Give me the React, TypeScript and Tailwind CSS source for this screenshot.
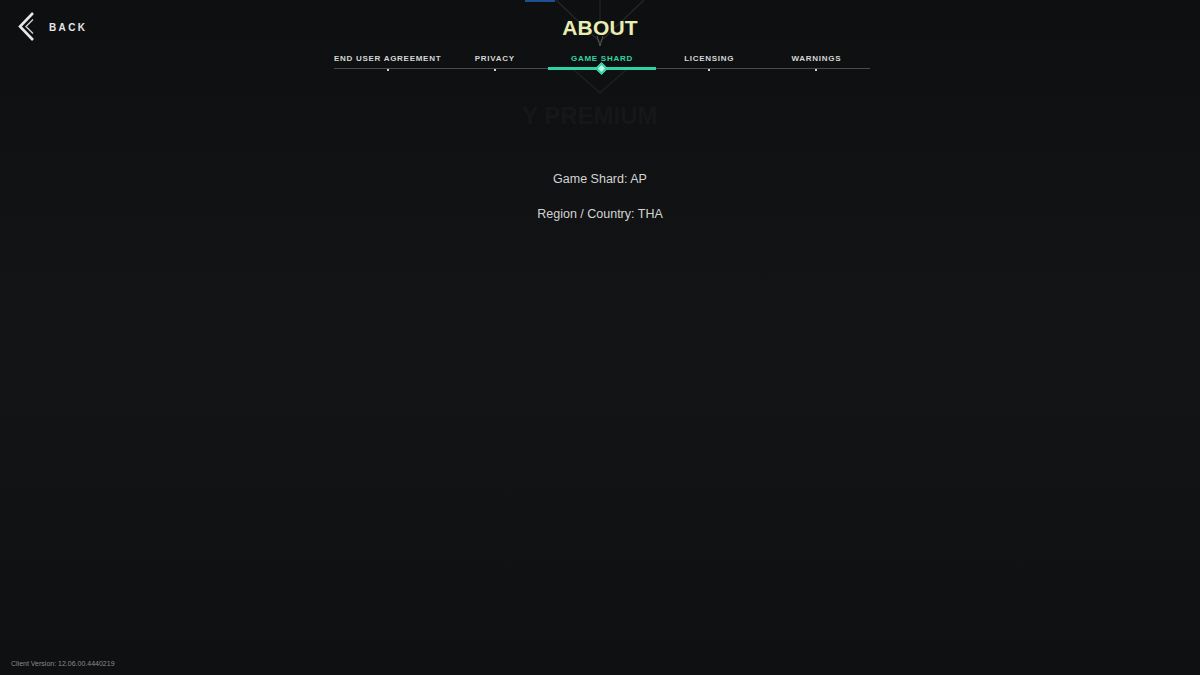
import React from "react";

const tabs = [
  { label: "END USER AGREEMENT" },
  { label: "PRIVACY" },
  { label: "GAME SHARD", active: true },
  { label: "LICENSING" },
  { label: "WARNINGS" },
];

function BackIcon() {
  return (
    <svg width="18" height="30" viewBox="0 0 18 30" fill="none">
      <path d="M15 1 L2 14.5 L15 28" stroke="#e8e8e8" strokeWidth="2.6" strokeLinejoin="miter" />
      <path d="M15 7.5 L8 14.5 L15 21.5" stroke="#d0d0d0" strokeWidth="1.4" />
    </svg>
  );
}

// faint diamond drawing behind the title
function BackdropLines() {
  return (
    <svg className="absolute left-0 top-0 pointer-events-none" width="1200" height="160" viewBox="0 0 1200 160" fill="none">
      <rect x="525" y="0" width="30" height="2" fill="#1f4f8f" />
      <path d="M556 0 L600 42 L644 0" stroke="#27282a" strokeWidth="1.2" />
      <path d="M600 0 L600 22" stroke="#27282a" strokeWidth="1" />
      <path d="M574 70 L600 93 L626 70" stroke="#202123" strokeWidth="1.2" />
      <path d="M597 36 L600 46 L603 36" stroke="#555" strokeWidth="1" />
      <text x="522" y="124" fill="#161718" fontFamily="'Liberation Sans', sans-serif" fontWeight="700" fontSize="24">Y  PREMIUM</text>
    </svg>
  );
}

export default function App() {
  return (
    <div
      className="relative w-[1200px] h-[675px] overflow-hidden bg-gradient-to-b from-[#0e0f10] via-[#131415] to-[#0f1011] text-white"
      style={{ fontFamily: "'Liberation Sans', Arial, sans-serif" }}
    >
      <BackdropLines />

      <div className="relative flex flex-col h-full">
        {/* Header */}
        <div className="grid grid-cols-[1fr_auto_1fr] items-start">
          <button className="flex items-center gap-[13px] pl-[18px] pt-[12px] justify-self-start">
            <BackIcon />
            <span className="text-[10px] font-bold tracking-[0.24em] text-[#e6e6e6]">BACK</span>
          </button>
          <h1 className="pt-[16px] text-[21px] leading-[24px] font-bold text-[#e9edb4] tracking-[0.01em]">
            ABOUT
          </h1>
          <div />
        </div>

        {/* Tabs */}
        <div className="mx-auto mt-[12px] w-[536px] translate-x-[2px]">
          <div className="grid grid-cols-5">
            {tabs.map((t) => (
              <div key={t.label} className="flex flex-col items-center">
                <span
                  className={
                    "text-[8px] leading-[10px] font-bold tracking-[0.09em] whitespace-nowrap " +
                    (t.active ? "text-[#31d3a6]" : "text-[#d6d6d6]")
                  }
                >
                  {t.label}
                </span>
              </div>
            ))}
          </div>
          <div className="relative mt-[4px] h-[1px] bg-[#4a4b4d]">
            <div className="grid grid-cols-5 h-full">
              {tabs.map((t) => (
                <div key={t.label} className="relative flex justify-center">
                  {t.active ? (
                    <>
                      <div className="absolute left-0 right-0 top-[-1px] h-[3px] bg-[#2fd2a6]" />
                      <div className="absolute top-[-4px] w-[9px] h-[9px] rotate-45 bg-[#bff5e4] border-[2px] border-[#2fd2a6]" />
                    </>
                  ) : (
                    <div className="absolute top-[1px] w-[2px] h-[2px] bg-[#cfcfcf]" />
                  )}
                </div>
              ))}
            </div>
          </div>
        </div>

        {/* Content */}
        <div className="mt-[102px] flex flex-col items-center gap-[19px] text-[12.5px] leading-[16px] text-[#d4d4d4]">
          <p>Game Shard: AP</p>
          <p>Region / Country: THA</p>
        </div>

        <div className="mt-auto pl-[11px] pb-[7px] text-[7px] leading-[9px] text-[#8b8c8d]">
          Client Version: 12.06.00.4440219
        </div>
      </div>
    </div>
  );
}
